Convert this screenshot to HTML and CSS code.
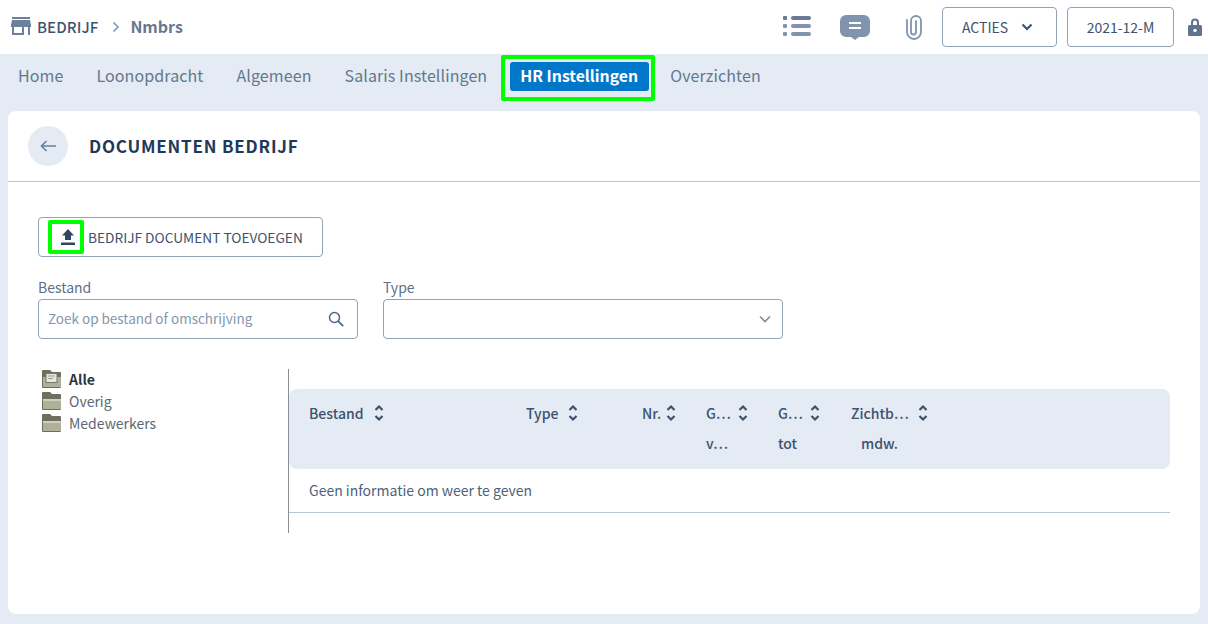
FILE: index.html
```html
<!DOCTYPE html>
<html lang="nl">
<head>
<meta charset="utf-8">
<title>Documenten bedrijf</title>
<link rel="stylesheet" href="styles.css">
</head>
<body>
<header class="topbar">
  <div class="crumbs">
    <svg class="store" viewBox="0 0 20 18" width="20" height="18"><path fill="#6c7f9b" d="M1 0h18v2H1zM1 3h18l1 5v2h-1v8H1v-8H0V8zM3 10v6h8v-6zM13 10v8h4v-8z"/></svg>
    <span class="crumb-root">BEDRIJF</span>
    <svg class="crumb-sep" viewBox="0 0 8 12" width="8" height="12"><path fill="none" stroke="#7b9bb8" stroke-width="1.7" d="M1.500 1.500 6 6l-4.500 4.500"/></svg>
    <span class="crumb-name">Nmbrs</span>
  </div>
  <div class="tools">
    <svg class="tool-list" viewBox="0 0 28 20" width="28" height="20"><g fill="#8194ad"><rect x="0" y="0" width="4" height="4" rx="1" fill="#6a7a96"/><rect x="0" y="8" width="4" height="4" rx="1"/><rect x="0" y="16" width="4" height="4" rx="1"/><rect x="8" y="0" width="20" height="4" rx="2" fill="#6a7a96"/><rect x="8" y="8" width="20" height="4" rx="2"/><rect x="8" y="16" width="20" height="4" rx="2"/></g></svg>
    <svg class="tool-chat" viewBox="0 0 30 25" width="30" height="25"><path fill="#8194ad" d="M6 0h18a6 6 0 0 1 6 6v10a6 6 0 0 1-6 6h-5l-4 3-4-3H6a6 6 0 0 1-6-6V6a6 6 0 0 1 6-6z"/><path stroke="#fff" stroke-width="2" d="M9 8h12M9 13h12"/></svg>
    <svg class="tool-clip" viewBox="0 0 18 26" width="18" height="26"><path fill="none" stroke="#8194ad" stroke-width="1.800" stroke-linecap="round" d="M2 6v12a7 7 0 0 0 14 0V7a5 5 0 0 0-10 0v11a2.500 2.500 0 0 0 5 0V7"/></svg>
    <button class="btn btn-actions"><span>ACTIES</span><svg viewBox="0 0 12 8" width="12" height="8"><path fill="none" stroke="#3e526d" stroke-width="2.200" d="M1.500 1.500 6 6l4.500-4.500"/></svg></button>
    <button class="btn btn-period">2021-12-M</button>
    <svg class="tool-lock" viewBox="0 0 14 18" width="14" height="18"><path fill="#5f7491" d="M3 7V4.500a4 4 0 0 1 8 0V7h1.500A1.500 1.500 0 0 1 14 8.500v8a1.500 1.500 0 0 1-1.500 1.500h-11A1.500 1.500 0 0 1 0 16.500v-8A1.500 1.500 0 0 1 1.500 7zm2 0h4V4.500a2 2 0 0 0-4 0z"/><circle cx="7" cy="12.500" r="1.700" fill="#fff"/></svg>
  </div>
</header>

<nav class="tabs">
  <a class="tab">Home</a>
  <a class="tab">Loonopdracht</a>
  <a class="tab">Algemeen</a>
  <a class="tab">Salaris Instellingen</a>
  <a class="tab tab-active">HR Instellingen<span class="mark mark-tab"></span></a>
  <a class="tab">Overzichten</a>
</nav>

<main class="card">
  <div class="card-head">
    <button class="back"><svg viewBox="0 0 16 12" width="16" height="12"><path fill="none" stroke="#66809e" stroke-width="1.600" d="M16 6H1.500M6.500 1 1.500 6l5 5"/></svg></button>
    <h1>DOCUMENTEN BEDRIJF</h1>
  </div>
  <div class="card-body">
    <button class="btn-upload">
      <span class="upload-icon"><svg viewBox="0 0 14 16" width="14" height="16"><path fill="#2f4763" d="M7 0l6 6.500H10V11H4V6.500H1zM0 13.500h14V16H0z"/></svg><span class="mark mark-icon"></span></span>
      <span>BEDRIJF DOCUMENT TOEVOEGEN</span>
    </button>
    <div class="filters">
      <div class="field field-file">
        <label>Bestand</label>
        <div class="input"><span class="placeholder">Zoek op bestand of omschrijving</span>
          <svg viewBox="0 0 16 16" width="16" height="16"><circle cx="6.500" cy="6.500" r="5" fill="none" stroke="#4f6885" stroke-width="1.500"/><path stroke="#4f6885" stroke-width="1.800" d="m10.200 10.200 5 5"/></svg>
        </div>
      </div>
      <div class="field field-type">
        <label>Type</label>
        <div class="input"><span></span>
          <svg viewBox="0 0 12 8" width="12" height="8"><path fill="none" stroke="#7d90a8" stroke-width="1.600" d="M1 1.500 6 6.500l5-5"/></svg>
        </div>
      </div>
    </div>
    <div class="split">
      <ul class="tree">
        <li class="tree-on"><svg viewBox="0 0 20 18" width="20" height="18"><path fill="#6e6f5e" d="M1 0h7l2 2h8a1 1 0 0 1 1 1v14a1 1 0 0 1-1 1H1a1 1 0 0 1-1-1V1a1 1 0 0 1 1-1z"/><path fill="#aeb09a" d="M1 7h18v10H1z"/><rect x="4" y="3.500" width="11" height="9" fill="#e6e6dc" stroke="#77786a"/><path stroke="#9a9b8c" d="M6 6h7M6 8.500h5"/></svg>Alle</li>
        <li><svg viewBox="0 0 20 18" width="20" height="18"><path fill="#6e6f5e" d="M1 0h7l2 2h8a1 1 0 0 1 1 1v14a1 1 0 0 1-1 1H1a1 1 0 0 1-1-1V1a1 1 0 0 1 1-1z"/><path fill="#aeb09a" d="M1 7h18v10H1z"/><path fill="#cfd0bd" d="M1 7h18v2H1z"/></svg>Overig</li>
        <li><svg viewBox="0 0 20 18" width="20" height="18"><path fill="#6e6f5e" d="M1 0h7l2 2h8a1 1 0 0 1 1 1v14a1 1 0 0 1-1 1H1a1 1 0 0 1-1-1V1a1 1 0 0 1 1-1z"/><path fill="#aeb09a" d="M1 7h18v10H1z"/><path fill="#cfd0bd" d="M1 7h18v2H1z"/></svg>Medewerkers</li>
      </ul>
      <section class="results">
        <div class="thead">
          <div class="th"><div class="th-top">Bestand<svg class="sort" viewBox="0 0 10 18" width="10" height="18"><path fill="none" stroke="#3e526d" stroke-width="2.200" d="M1.500 6 5 2.500 8.500 6M1.500 12 5 15.500 8.500 12"/></svg></div></div>
          <div class="th"><div class="th-top">Type<svg class="sort" viewBox="0 0 10 18" width="10" height="18"><path fill="none" stroke="#3e526d" stroke-width="2.200" d="M1.500 6 5 2.500 8.500 6M1.500 12 5 15.500 8.500 12"/></svg></div></div>
          <div class="th"><div class="th-top narrow">Nr.<svg class="sort" viewBox="0 0 10 18" width="10" height="18"><path fill="none" stroke="#3e526d" stroke-width="2.200" d="M1.500 6 5 2.500 8.500 6M1.500 12 5 15.500 8.500 12"/></svg></div></div>
          <div class="th"><div class="th-top tight">G…<svg class="sort" viewBox="0 0 10 18" width="10" height="18"><path fill="none" stroke="#3e526d" stroke-width="2.200" d="M1.500 6 5 2.500 8.500 6M1.500 12 5 15.500 8.500 12"/></svg></div><div class="th-sub">v…</div></div>
          <div class="th"><div class="th-top tight">G…<svg class="sort" viewBox="0 0 10 18" width="10" height="18"><path fill="none" stroke="#3e526d" stroke-width="2.200" d="M1.500 6 5 2.500 8.500 6M1.500 12 5 15.500 8.500 12"/></svg></div><div class="th-sub">tot</div></div>
          <div class="th"><div class="th-top wide">Zichtb…<svg class="sort" viewBox="0 0 10 18" width="10" height="18"><path fill="none" stroke="#3e526d" stroke-width="2.200" d="M1.500 6 5 2.500 8.500 6M1.500 12 5 15.500 8.500 12"/></svg></div><div class="th-sub indent">mdw.</div></div>
        </div>
        <div class="empty">Geen informatie om weer te geven</div>
      </section>
    </div>
  </div>
</main>
</body>
</html>
```
FILE: styles.css
```css
* { box-sizing: border-box; }
html, body { height: 100%; }
body {
  margin: 0;
  background: #e4ebf4;
  font-family: "Noto Sans CJK SC", "Noto Sans", sans-serif;
  color: #3e526d;
  overflow: hidden;
}
button { font-family: inherit; cursor: pointer; }

.topbar {
  height: 54px;
  background: #fff;
  display: flex;
  justify-content: space-between;
  align-items: center;
  padding: 0 6px 0 11px;
}
.crumbs { display: flex; align-items: center; }
.store { display: block; margin-top: -2px; }
.crumb-root { margin-left: 6px; font-size: 15px; line-height: 20px; font-weight: 500; color: #3b5472; letter-spacing: .1px; }
.crumb-sep { margin-left: 14px; }
.crumb-name { margin-left: 10px; font-size: 16px; line-height: 22px; font-weight: 700; color: #66788f; margin-top: -2px; }

.tools { display: flex; align-items: center; }
.tool-list { display: block; margin-right: 29px; margin-top: -2px; }
.tool-chat { display: block; margin-right: 35px; }
.tool-clip { display: block; margin-right: 19px; }
.btn {
  height: 40px;
  background: #fff;
  border: 1px solid #8fa3b8;
  border-radius: 4px;
  font-size: 14px;
  color: #3e526d;
  padding: 0;
  display: flex;
  align-items: center;
  justify-content: center;
}
.btn-actions { width: 115px; gap: 13px; justify-content: flex-start; padding-left: 19px; }
.btn-period { width: 107px; margin-left: 10px; }
.tool-lock { display: block; margin-left: 14px; }

.tabs {
  height: 57px;
  padding: 8px 0 0 10px;
  display: flex;
  align-items: flex-start;
  gap: 17px;
}
.tab {
  position: relative;
  height: 29px;
  padding: 0 8px;
  border-radius: 3px;
  font-size: 16px;
  letter-spacing: .1px;
  line-height: 27px;
  color: #65778d;
  white-space: nowrap;
}
.tab-active {
  width: 139px;
  margin: 0 -4px 0 -2px;
  padding: 0 10px;
  background: #0077c8;
  color: #fff;
  font-size: 15.800px;
  font-weight: 700;
  letter-spacing: 0;
}
.mark { position: absolute; border: 4px solid #00ff00; border-radius: 2px; pointer-events: none; }
.mark-tab { left: -9px; right: -6px; top: -7px; bottom: -10px; }
.mark-icon { left: 0; right: 0; top: 0; bottom: 0; }

.card {
  height: 503px;
  margin: 0 8px;
  background: #fff;
  border-radius: 8px;
}
.card-head {
  height: 71px;
  padding: 0 20px;
  display: flex;
  align-items: center;
  border-bottom: 1px solid #b5c6d6;
}
.back {
  width: 40px;
  height: 40px;
  border: 0;
  border-radius: 50%;
  background: #e4ebf4;
  padding: 0;
  display: flex;
  align-items: center;
  justify-content: center;
}
.card-head h1 {
  margin: 0 0 0 21px;
  font-size: 17px;
  line-height: 24px;
  font-weight: 700;
  letter-spacing: .8px;
  color: #1f3a58;
}
.card-body { padding: 35px 30px 0; }

.btn-upload {
  width: 285px;
  height: 40px;
  background: #fff;
  border: 1px solid #8fa3b8;
  border-radius: 4px;
  padding: 0 0 0 9px;
  display: flex;
  align-items: center;
  font-size: 13.700px;
  color: #3e526d;
}
.upload-icon {
  position: relative;
  width: 36px;
  height: 34px;
  margin-right: 4px;
  padding-left: 3px;
  display: flex;
  align-items: center;
  justify-content: center;
}
.upload-icon svg { display: block; }

.filters { display: flex; gap: 25px; margin-top: 20px; }
.field label { display: block; font-size: 14px; line-height: 20px; color: #5d7089; margin-bottom: 2px; }
.field-file { width: 320px; }
.field-type { width: 400px; }
.input {
  height: 40px;
  border: 1px solid #8fa3b8;
  border-radius: 4px;
  display: flex;
  justify-content: space-between;
  align-items: center;
  padding: 0 13px 0 9px;
}
.field-type .input { padding-right: 11px; }
.placeholder { font-size: 13.500px; line-height: 18px; margin-top: -2px; color: #8497ad; }

.split { display: flex; margin-top: 30px; height: 164px; }
.tree {
  width: 251px;
  margin: 0;
  padding: 0 0 0 4px;
  list-style: none;
  border-right: 1px solid #8a8f96;
  flex: none;
}
.tree li {
  height: 22px;
  padding-bottom: 2px;
  display: flex;
  align-items: center;
  gap: 7px;
  font-size: 14px;
  color: #5b6875;
}
.tree svg { display: block; }
.tree .tree-on { font-weight: 700; color: #2b3540; }

.results { flex: 0 0 881px; padding-top: 20px; }
.thead {
  height: 80px;
  background: #e4ebf4;
  border-radius: 8px;
  padding: 13px 0 0 20px;
  display: grid;
  grid-template-columns: 217px 116px 64px 72px 73px 1fr;
}
.th-top {
  display: flex;
  align-items: center;
  height: 22px;
  font-size: 14px;
  font-weight: 500;
  color: #3e526d;
  gap: 10px;
}
.th-top.narrow { gap: 5px; }
.th-top.tight { gap: 7px; }
.th-top.wide { gap: 9px; }
.sort { display: block; }
.th-sub { margin-top: 8px; font-size: 14px; line-height: 22px; font-weight: 500; color: #3e526d; }
.th-sub.indent { padding-left: 10px; }
.empty {
  height: 44px;
  padding: 0 0 2px 20px;
  display: flex;
  align-items: center;
  font-size: 14px;
  color: #4d627c;
  border-bottom: 1px solid #b5c6d6;
}
```
